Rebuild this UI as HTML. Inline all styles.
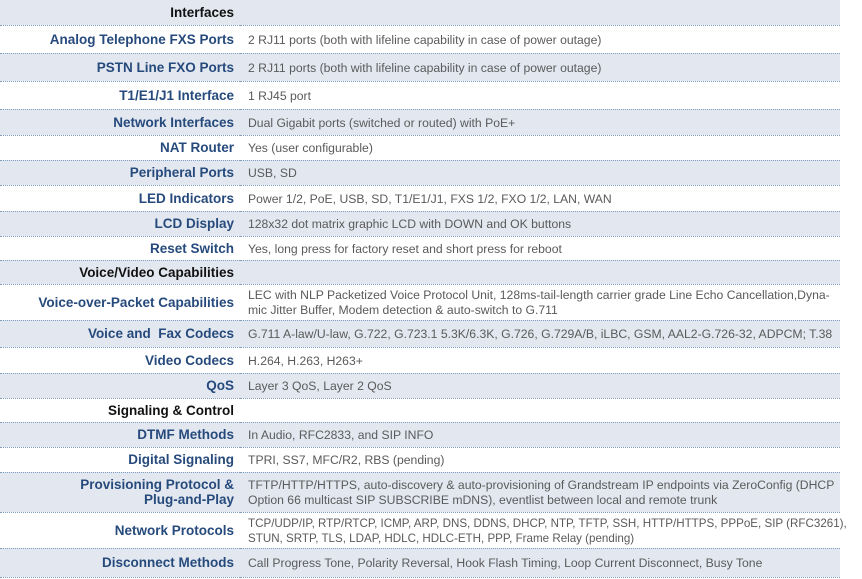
<!DOCTYPE html>
<html><head><meta charset="utf-8"><style>
body{margin:0;background:#fff;width:862px;height:579px;overflow:hidden;font-family:"Liberation Sans",sans-serif}
table{position:absolute;left:0;top:0;width:840px;border-collapse:collapse;table-layout:fixed}
td{border-bottom:1px dotted #7d9cbf;padding:0;vertical-align:middle;overflow:visible}
td.l{text-align:right;padding-right:6px;color:#264a7c;font-weight:bold;font-size:13.5px}
td.v{padding-left:8px;padding-top:2px;color:#5a5a5a;font-size:12.2px;line-height:15px;white-space:nowrap}
tr.g td{background:#e3e8f0}
tr.h td.l{color:#111}
</style></head><body>
<table>
<colgroup><col style="width:240px"><col style="width:600px"></colgroup>
<tr class="g h" style="height:25px"><td class="l">Interfaces</td><td class="v"></td></tr>
<tr style="height:28px"><td class="l">Analog Telephone FXS Ports</td><td class="v">2 RJ11 ports (both with lifeline capability in case of power outage)</td></tr>
<tr class="g" style="height:28px"><td class="l">PSTN Line FXO Ports</td><td class="v">2 RJ11 ports (both with lifeline capability in case of power outage)</td></tr>
<tr style="height:28px"><td class="l">T1/E1/J1 Interface</td><td class="v">1 RJ45 port</td></tr>
<tr class="g" style="height:26px"><td class="l">Network Interfaces</td><td class="v">Dual Gigabit ports (switched or routed) with PoE+</td></tr>
<tr style="height:25px"><td class="l">NAT Router</td><td class="v">Yes (user configurable)</td></tr>
<tr class="g" style="height:25px"><td class="l">Peripheral Ports</td><td class="v">USB, SD</td></tr>
<tr style="height:26px"><td class="l">LED Indicators</td><td class="v">Power 1/2, PoE, USB, SD, T1/E1/J1, FXS 1/2, FXO 1/2, LAN, WAN</td></tr>
<tr class="g" style="height:25px"><td class="l">LCD Display</td><td class="v">128x32 dot matrix graphic LCD with DOWN and OK buttons</td></tr>
<tr style="height:24px"><td class="l">Reset Switch</td><td class="v">Yes, long press for factory reset and short press for reboot</td></tr>
<tr class="g h" style="height:24px"><td class="l">Voice/Video Capabilities</td><td class="v"></td></tr>
<tr style="height:36px"><td class="l">Voice-over-Packet Capabilities</td><td class="v">LEC with NLP Packetized Voice Protocol Unit, 128ms-tail-length carrier grade Line Echo Cancellation,Dyna-<br>mic Jitter Buffer, Modem detection &amp; auto-switch to G.711</td></tr>
<tr class="g" style="height:27px"><td class="l">Voice and&nbsp; Fax Codecs</td><td class="v">G.711 A-law/U-law, G.722, G.723.1 5.3K/6.3K, G.726, G.729A/B, iLBC, GSM, AAL2-G.726-32, ADPCM; T.38</td></tr>
<tr style="height:26px"><td class="l">Video Codecs</td><td class="v">H.264, H.263, H263+</td></tr>
<tr class="g" style="height:25px"><td class="l">QoS</td><td class="v">Layer 3 QoS, Layer 2 QoS</td></tr>
<tr class="h" style="height:24px"><td class="l">Signaling &amp; Control</td><td class="v"></td></tr>
<tr class="g" style="height:25px"><td class="l">DTMF Methods</td><td class="v">In Audio, RFC2833, and SIP INFO</td></tr>
<tr style="height:25px"><td class="l">Digital Signaling</td><td class="v">TPRI, SS7, MFC/R2, RBS (pending)</td></tr>
<tr class="g" style="height:40px"><td class="l">Provisioning Protocol &amp;<br>Plug-and-Play</td><td class="v">TFTP/HTTP/HTTPS, auto-discovery &amp; auto-provisioning of Grandstream IP endpoints via ZeroConfig (DHCP<br>Option 66 multicast SIP SUBSCRIBE mDNS), eventlist between local and remote trunk</td></tr>
<tr style="height:36px"><td class="l">Network Protocols</td><td class="v" style="font-size:11.6px">TCP/UDP/IP, RTP/RTCP, ICMP, ARP, DNS, DDNS, DHCP, NTP, TFTP, SSH, HTTP/HTTPS, PPPoE, SIP (RFC3261),<br>STUN, SRTP, TLS, LDAP, HDLC, HDLC-ETH, PPP, Frame Relay (pending)</td></tr>
<tr class="g" style="height:29px"><td class="l">Disconnect Methods</td><td class="v">Call Progress Tone, Polarity Reversal, Hook Flash Timing, Loop Current Disconnect, Busy Tone</td></tr>
</table>
</body></html>
